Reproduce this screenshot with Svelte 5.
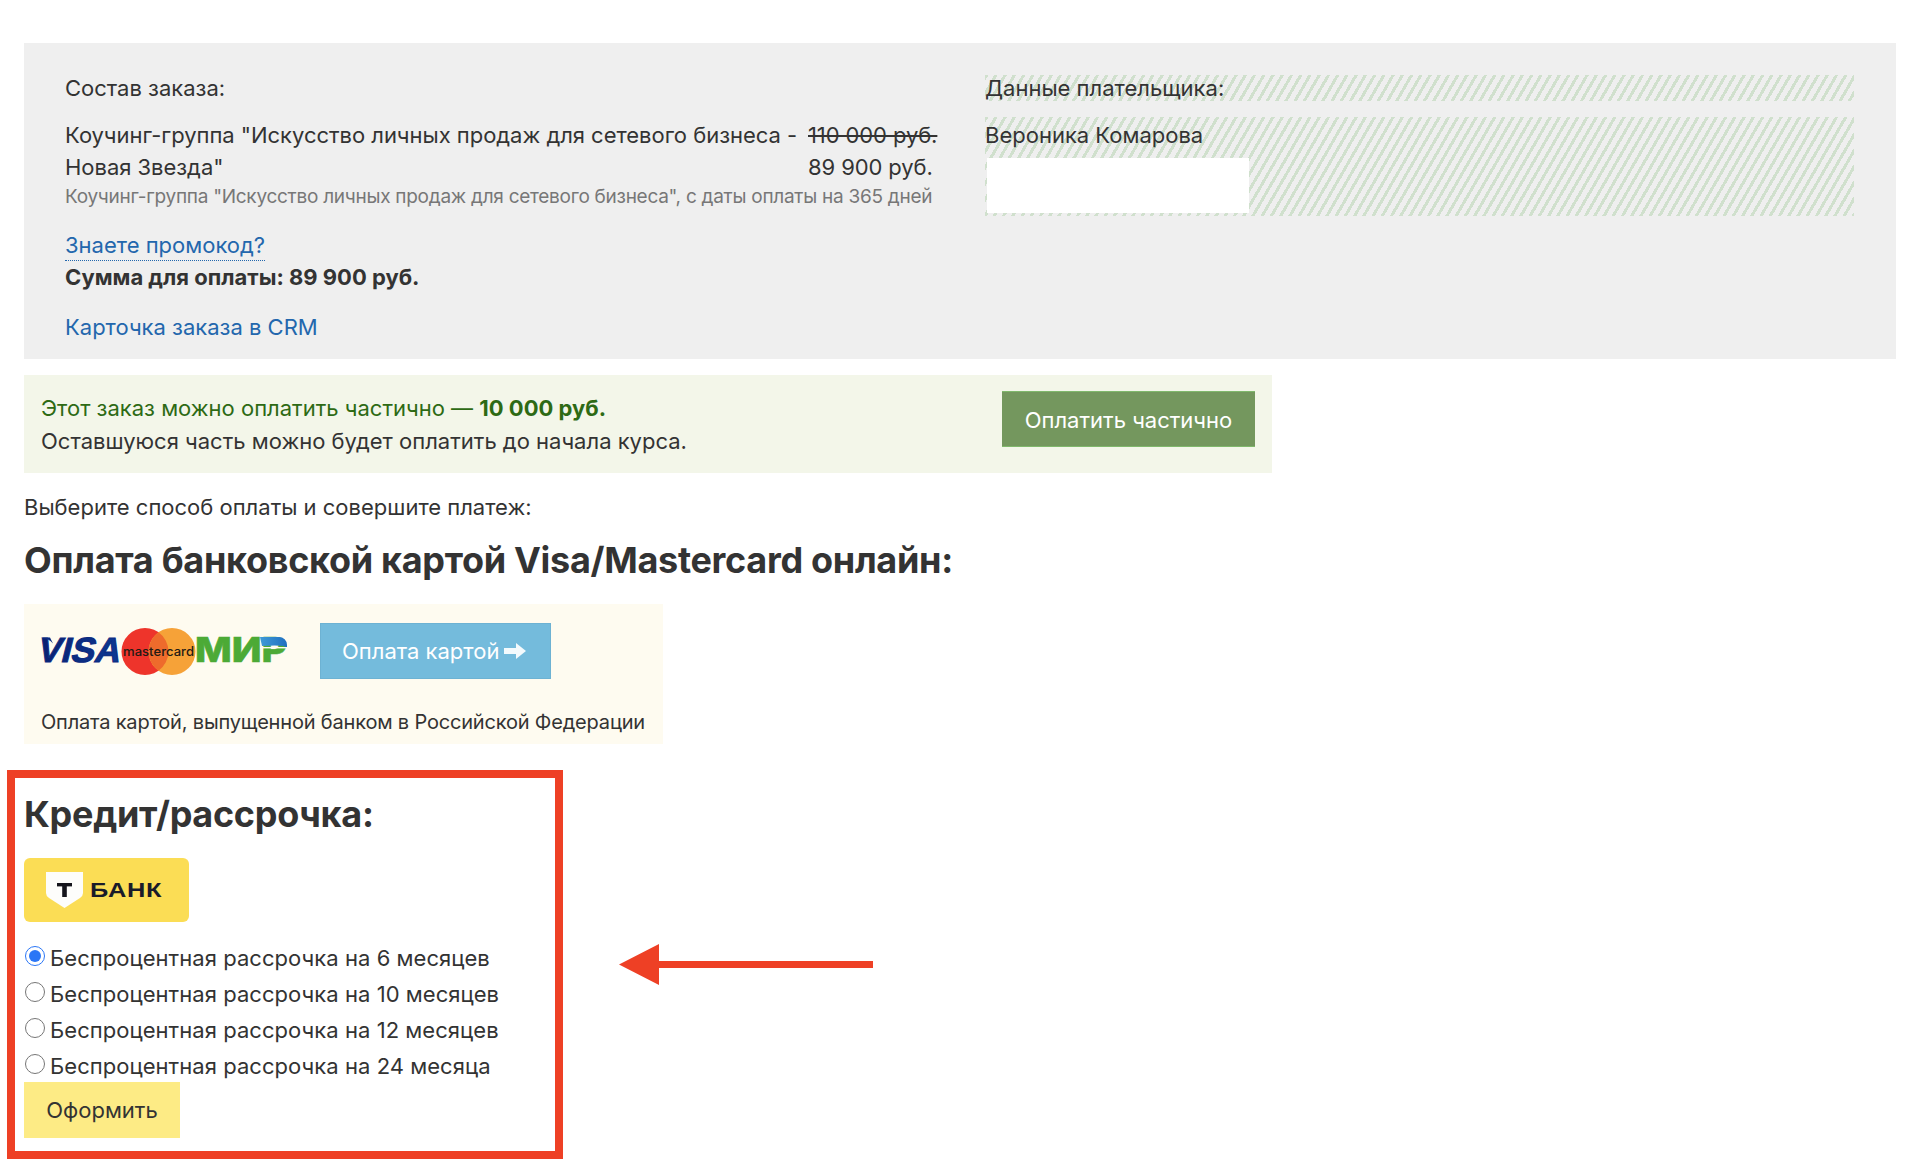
<script>
  let plans = $state([
    { id: 6, label: 'Беспроцентная рассрочка на 6 месяцев' },
    { id: 10, label: 'Беспроцентная рассрочка на 10 месяцев' },
    { id: 12, label: 'Беспроцентная рассрочка на 12 месяцев' },
    { id: 24, label: 'Беспроцентная рассрочка на 24 месяца' }
  ]);
  let selected = $state(6);
</script>

<div class="page">
  <section class="order">
    <div class="col left">
      <div class="title">Состав заказа:</div>
      <div class="item">
        <div class="name">Коучинг-группа "Искусство личных продаж для сетевого бизнеса - Новая Звезда"</div>
        <div class="price"><s>110 000 руб.</s><br />89 900 руб.</div>
      </div>
      <div class="sub">Коучинг-группа "Искусство личных продаж для сетевого бизнеса", с даты оплаты на 365 дней</div>
      <div class="promo"><a href="#promo" class="dotted">Знаете промокод?</a></div>
      <div class="sum">Сумма для оплаты: 89 900 руб.</div>
      <div class="crm"><a href="#crm">Карточка заказа в CRM</a></div>
    </div>
    <div class="col right">
      <div class="title striped">Данные плательщика:</div>
      <div class="payer striped">
        <div class="person">Вероника Комарова</div>
        <div class="masked"></div>
      </div>
    </div>
  </section>

  <section class="partial">
    <div class="partial-text">
      <div class="green">Этот заказ можно оплатить частично — <b>10 000 руб.</b></div>
      <div>Оставшуюся часть можно будет оплатить до начала курса.</div>
    </div>
    <button class="btn-green">Оплатить частично</button>
  </section>

  <p class="choose">Выберите способ оплаты и совершите платеж:</p>
  <h2 class="h-card">Оплата банковской картой Visa/Mastercard онлайн:</h2>

  <section class="card">
    <div class="card-row">
      <svg class="logos" viewBox="0 0 246 47" width="246" height="47" aria-label="Visa Mastercard Мир">
        <defs>
          <linearGradient id="visaG" x1="0" x2="1" y1="0" y2="0">
            <stop offset="0" stop-color="#0a1f70" />
            <stop offset="1" stop-color="#0d3a94" />
          </linearGradient>
          <linearGradient id="mirG" x1="0" x2="1" y1="0" y2="0">
            <stop offset="0" stop-color="#3f9ad6" />
            <stop offset="1" stop-color="#1f6fc0" />
          </linearGradient>
        </defs>
        <text class="visa" x="0" y="0" textLength="83" lengthAdjust="spacingAndGlyphs" transform="translate(-5 34) skewX(-14)" fill="url(#visaG)" stroke="#0b2a80" stroke-width="1">VISA</text>
        <path d="M0 9.500h9l3 6q-4-5-12-6z" fill="#0b2a80" />
        <circle cx="104" cy="23.500" r="23.500" fill="#ee342b" />
        <circle cx="131" cy="23.500" r="23.500" fill="#f6a238" />
        <path d="M117.500 4.300a23.500 23.500 0 0 1 0 38.400a23.500 23.500 0 0 1 0-38.400z" fill="#ee6b2c" />
        <text class="mc" x="82" y="28" textLength="71" lengthAdjust="spacingAndGlyphs">mastercard</text>
        <text class="mir" x="154" y="34" textLength="92" lengthAdjust="spacingAndGlyphs" stroke="#4caa36" stroke-width="0.6">МИР</text>
        <path d="M219 9h19a8 8 0 0 1 8 8v2h-2l-1-1q-8-1-22 0z" fill="url(#mirG)" />
        <rect x="219" y="19" width="27" height="1.400" fill="#fefbf0" />
      </svg>
      <button class="btn-blue">
        Оплата картой
        <svg class="arrow-w" viewBox="0 0 22 16" width="22" height="16" aria-hidden="true">
          <path d="M0 5h12V0l10 8-10 8v-5H0z" fill="#f3fafd" />
        </svg>
      </button>
    </div>
    <div class="card-note">Оплата картой, выпущенной банком в Российской Федерации</div>
  </section>

  <section class="credit">
    <h2 class="h-credit">Кредит/рассрочка:</h2>
    <div class="tbank">
      <svg viewBox="0 0 37 36" width="37" height="36" aria-hidden="true">
        <path d="M0 0h37v21q0 3-3 5L18.500 36L3 26q-3-2-3-5z" fill="#fdfdfb" />
        <rect x="11" y="11" width="15" height="3.400" fill="#15151c" />
        <rect x="16.200" y="11" width="4.600" height="14" fill="#15151c" />
      </svg>
      <span class="bank-word">БАНК</span>
    </div>
    <div class="plans">
      {#each plans as plan (plan.id)}
        <label class="plan">
          <input type="radio" name="plan" value={plan.id} bind:group={selected} />
          <span>{plan.label}</span>
        </label>
      {/each}
    </div>
    <button class="btn-yellow">Оформить</button>
  </section>

  <div class="frame"></div>
  <svg class="red-arrow" viewBox="0 0 254 41" width="254" height="41" aria-hidden="true">
    <path d="M0 20.500 40 0v17h214v7H40v17z" fill="#ee4025" />
  </svg>
</div>

<style>
  :global(body) {
    margin: 0;
    background: #fff;
  }
  .page {
    position: relative;
    height: 1172px;
    box-sizing: border-box;
    padding: 43px 24px 0;
    font-family: Inter, "Noto Sans", sans-serif;
    font-size: 22px;
    line-height: 32px;
    color: #333;
    letter-spacing: 0;
  }
  a {
    color: #2367ad;
    text-decoration: none;
  }
  button {
    font: inherit;
    letter-spacing: inherit;
    border: 0;
    padding: 0;
    cursor: pointer;
  }

  .order {
    display: grid;
    grid-template-columns: 870px 869px;
    column-gap: 50px;
    height: 316px;
    box-sizing: border-box;
    padding: 32px 42px 0 41px;
    background: #efefef;
  }
  .title {
    line-height: 26px;
    height: 26px;
    margin-bottom: 16px;
  }
  .item {
    display: flex;
    padding-top: 2px;
  }
  .name {
    flex: none;
    width: 743px;
    letter-spacing: -0.03px;
  }
  .price {
    white-space: nowrap;
    letter-spacing: -0.1px;
  }
  .sub {
    font-size: 19px;
    line-height: 24px;
    margin-top: 2px;
    color: #777;
    white-space: nowrap;
    letter-spacing: -0.27px;
  }
  .promo {
    margin-top: 20px;
    height: 32px;
  }
  .dotted {
    display: inline-block;
    height: 31px;
    border-bottom: 1px dotted #2367ad;
  }
  .sum {
    font-weight: 700;
  }
  .crm {
    margin-top: 18px;
  }
  .striped {
    background: repeating-linear-gradient(120deg, #d0e0cd 0 3px, #efefef 3px 8px);
  }
  .payer {
    height: 99px;
    padding-top: 2px;
    box-sizing: border-box;
    position: relative;
  }
  .person {
    height: 32px;
  }
  .masked {
    position: absolute;
    left: 2px;
    top: 41px;
    width: 262px;
    height: 55px;
    background: #fff;
  }

  .partial {
    display: flex;
    align-items: flex-start;
    justify-content: space-between;
    box-sizing: border-box;
    width: 1248px;
    height: 98px;
    margin-top: 16px;
    padding: 16px 17px 0;
    background: #f3f6e9;
  }
  .partial-text {
    padding-top: 1px;
    line-height: 33px;
  }
  .green {
    color: #2d6a14;
  }
  .btn-green {
    width: 253px;
    height: 56px;
    padding-top: 1px;
    color: #fff;
    background: #74975e;
    border-top: 1px solid #80b86c;
    border-bottom: 1px solid #80b86c;
  }

  .choose {
    margin: 18px 0 0;
    line-height: 32px;
  }
  .h-card {
    margin: 13px 0 0;
    font-size: 36px;
    line-height: 48px;
    font-weight: 700;
    letter-spacing: -0.3px;
  }

  .card {
    box-sizing: border-box;
    width: 639px;
    height: 140px;
    margin-top: 20px;
    padding: 19px 17px 0;
    background: #fefbf0;
  }
  .card-row {
    display: flex;
    align-items: center;
    gap: 33px;
  }
  .logos {
    display: block;
    flex: none;
    overflow: visible;
  }
  .visa {
    font-family: "Liberation Sans", sans-serif;
    font-weight: 700;
    font-size: 35px;
    letter-spacing: 0;
  }
  .mc {
    font-family: Inter, sans-serif;
    font-size: 12.500px;
    font-weight: 500;
    letter-spacing: 0;
    fill: #231a14;
  }
  .mir {
    font-family: Inter, sans-serif;
    font-weight: 800;
    font-size: 34px;
    letter-spacing: 0;
    fill: #4caa36;
  }
  .btn-blue {
    display: flex;
    align-items: center;
    gap: 5px;
    width: 231px;
    height: 56px;
    box-sizing: border-box;
    padding-left: 21px;
    color: #fff;
    background: #74bbdc;
    border: 1px solid #6db2d3;
  }
  .arrow-w {
    display: block;
  }
  .card-note {
    margin-top: 27px;
    line-height: 32px;
    font-size: 20px;
    letter-spacing: -0.18px;
    white-space: nowrap;
  }

  .credit {
    margin-top: 46px;
  }
  .h-credit {
    margin: 0;
    font-size: 36px;
    line-height: 48px;
    font-weight: 700;
    letter-spacing: -0.3px;
  }
  .tbank {
    display: flex;
    align-items: center;
    gap: 7px;
    box-sizing: border-box;
    width: 165px;
    height: 64px;
    margin-top: 20px;
    padding-left: 22px;
    border-radius: 6px;
    background: #fbdd55;
  }
  .bank-word {
    font-family: "Liberation Sans", sans-serif;
    font-weight: 700;
    font-size: 20px;
    line-height: 20px;
    letter-spacing: 0.5px;
    color: #1a1b29;
    transform: scaleX(1.27);
    transform-origin: left center;
  }
  .plans {
    margin-top: 19px;
  }
  .plan {
    display: flex;
    height: 36px;
    align-items: center;
    gap: 5px;
  }
  .plan span {
    margin-top: -2px;
    letter-spacing: 0.05px;
  }
  .plan input {
    width: 20px;
    height: 20px;
    margin: 0 0 7px 1px;
    flex: none;
    accent-color: #2a76f6;
  }
  .btn-yellow {
    display: block;
    width: 156px;
    height: 56px;
    margin-top: -3px;
    color: #333;
    background: #fdeb85;
  }

  .frame {
    position: absolute;
    left: 7px;
    top: 770px;
    width: 556px;
    height: 389px;
    box-sizing: border-box;
    border: 8px solid #ee4025;
    pointer-events: none;
  }
  .red-arrow {
    position: absolute;
    left: 619px;
    top: 944px;
    display: block;
  }
</style>
